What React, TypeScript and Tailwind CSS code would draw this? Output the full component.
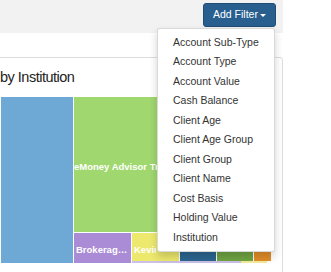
import React from "react";

const filters = [
  "Account Sub-Type",
  "Account Type",
  "Account Value",
  "Cash Balance",
  "Client Age",
  "Client Age Group",
  "Client Group",
  "Client Name",
  "Cost Basis",
  "Holding Value",
  "Institution",
];

function Treemap() {
  return (
    <div className="flex h-[166px] w-[270px] gap-px bg-white">
      <div className="w-[72px] bg-[#6ea9d6]" />
      <div className="flex flex-1 flex-col gap-px">
        {/* big green cell, label runs under the open menu */}
        <div className="flex h-[135px] items-center bg-[#a0d76e]">
          <div className="w-[84px] overflow-hidden">
            <span className="whitespace-nowrap text-[9.5px] font-bold text-white">
              eMoney Advisor Trust
            </span>
          </div>
        </div>
        <div className="flex h-[30px] gap-px">
          <div className="w-[57px] overflow-hidden bg-[#a98cd5] pl-[2px] pt-[3px]">
            <span className="whitespace-nowrap text-[9.5px] font-bold text-white">Brokerag…</span>
          </div>
          <div className="flex flex-1 flex-col">
            <div className="flex h-[28px] gap-px">
              <div className="w-[47px] bg-[#ede96e] pl-[2px] pt-[3px]">
                <div className="w-[22px] overflow-hidden">
                  <span className="whitespace-nowrap text-[9.5px] font-bold text-white">Kevin…</span>
                </div>
              </div>
              <div className="w-[36px] bg-[#2d6792]" />
              <div className="w-[36px] bg-[#71a542]" />
              <div className="w-[17px] bg-[#e38e29]" />
            </div>
            <div className="flex h-[2px]">
              <div className="w-[109px] bg-[#cbc1e8]" />
              <div className="w-[26px] bg-[#f6ec9c]" />
            </div>
          </div>
        </div>
      </div>
    </div>
  );
}

export default function App() {
  return (
    <div
      className="relative h-[272px] w-[331px] overflow-hidden bg-white text-[#333]"
      style={{ fontFamily: '"Liberation Sans", Arial, sans-serif' }}
    >
      {/* toolbar */}
      <div className="flex h-[33px] w-[283px] items-start justify-end bg-[#f2f2f2] pr-[7px] pt-[3px]">
        <button className="flex h-[24px] w-[73px] items-center rounded-[3px] border border-[#204d74] bg-[#285f8f] pl-[9px] text-[10.5px] text-white">
          Add Filter
          <span className="ml-[2px] h-0 w-0 border-x-[3px] border-t-[3.5px] border-x-transparent border-t-white" />
        </button>
      </div>

      {/* panel */}
      <div className="-ml-[10px] mt-[24px] w-[293px] rounded-tr-[3px] border border-[#ddd] pl-[10px]">
        <div className="flex h-[39px] items-center">
          <h3 className="-ml-[1px] whitespace-nowrap text-[14.5px] tracking-[-0.5px] text-[#222]">
            by Institution
          </h3>
        </div>
        <Treemap />
        <div className="h-[20px]" />
      </div>

      {/* dropdown menu */}
      <ul className="absolute left-[157px] top-[28px] w-[118px] rounded-[3px] border border-black/15 bg-white py-[3.75px] shadow-[0_4.5px_9px_rgba(0,0,0,0.175)]">
        {filters.map((f) => (
          <li key={f} className="flex h-[19.5px] items-center whitespace-nowrap pl-[15px] text-[10.5px] text-[#333]">
            {f}
          </li>
        ))}
      </ul>
    </div>
  );
}
